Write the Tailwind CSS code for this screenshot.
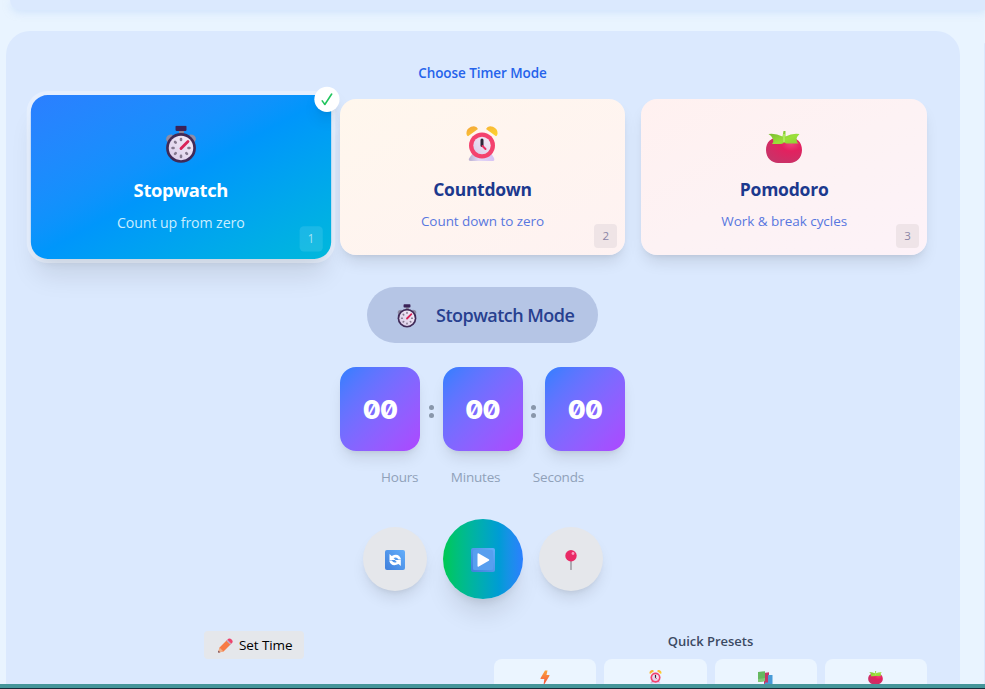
<!DOCTYPE html>
<html lang="en">
<head>
<meta charset="utf-8">
<title>Timer</title>
<script src="https://cdn.jsdelivr.net/npm/@tailwindcss/browser@4"></script>
</head>
<body class="flex h-[689px] w-[985px] flex-col overflow-hidden bg-[#e9f4ff] font-['Open_Sans','Noto_Sans',sans-serif]">
<svg width="0" height="0" class="absolute">
  <defs>
    <linearGradient id="gold" x1="0" y1="0" x2="1" y2="1"><stop stop-color="#f3a63a"/><stop offset="1" stop-color="#ffd62e"/></linearGradient>
    <linearGradient id="face" x1="1" y1="0" x2="0" y2="1"><stop stop-color="#f6edf8"/><stop offset="1" stop-color="#d9cbe8"/></linearGradient>
    <linearGradient id="base" x1="0" y1="0" x2="1" y2="0"><stop stop-color="#b9afd0"/><stop offset=".4" stop-color="#e3d8f5"/><stop offset="1" stop-color="#d6c2f5"/></linearGradient>
    <radialGradient id="red" cx=".7" cy=".25" r=".8"><stop stop-color="#f0407a"/><stop offset=".35" stop-color="#e3215f"/><stop offset="1" stop-color="#c93268"/></radialGradient>
    <linearGradient id="leaf" x1="0" y1="0" x2="1" y2="1"><stop stop-color="#72b52c"/><stop offset=".6" stop-color="#9be03a"/><stop offset="1" stop-color="#8ccc35"/></linearGradient>
    <linearGradient id="blue" x1="1" y1="0" x2="0" y2="1"><stop stop-color="#62aefb"/><stop offset="1" stop-color="#3f7fdb"/></linearGradient>
    <linearGradient id="bolt" x1="0" y1="0" x2="0" y2="1"><stop stop-color="#fba43b"/><stop offset="1" stop-color="#f4513f"/></linearGradient>
    <symbol id="stopwatch" viewBox="0 0 32 38">
      <path d="M14 5h5v5h-5z" fill="#8c8698"/>
      <rect x="10.500" y="0" width="11" height="5.500" rx="1.200" fill="#3b2257"/>
      <path d="M1 14q0-5 6-5l2 3-6 6zM31 14q0-5-6-5l-2 3 6 6z" fill="#8f8ca5"/>
      <circle cx="16" cy="22.500" r="15" fill="#402a57"/>
      <circle cx="16" cy="22.500" r="12.300" fill="url(#face)"/>
      <g stroke="#85798f" stroke-width="2.600" stroke-linecap="round"><path d="M16 13.500v1M16 30.500v1M7.500 22.500h1M23.500 22.500h1M10 16.500l.7.7M21.300 27.800l.7.7M10 28.500l.7-.7"/></g>
      <path d="M16 23l7-7" stroke="#d92358" stroke-width="2.900" stroke-linecap="round"/>
    </symbol>
    <symbol id="alarm" viewBox="0 0 32 36">
      <path d="M7 27h18l3 5q1 3-1 3H5q-4 0-1-4z" fill="url(#base)"/>
      <path d="M.5 8Q0 3 5 .8q5-2 7 2.200L2 10.200Q.8 10 .5 8zM31.500 8Q32 3 27 .8q-5-2-7 2.200l10 7.200q1.200-.2 1.500-2.200z" fill="url(#gold)"/>
      <circle cx="16" cy="19.500" r="13" fill="#f4426e"/>
      <circle cx="16" cy="19.500" r="8.700" fill="url(#face)"/>
      <path d="M16 14v5.500" stroke="#2f2437" stroke-width="3" stroke-linecap="round"/><path d="M16.500 20l3 3" stroke="#e92e62" stroke-width="2" stroke-linecap="round"/>
    </symbol>
    <symbol id="tomato" viewBox="0 0 36 32">
      <path d="M18 8C27 4 36 9 36 19c0 8-6 13-12 13H12C6 32 0 27 0 19 0 9 9 4 18 8z" fill="url(#red)"/>
      <path d="M2.500 3q7-1 14 2.500L17.500 0h2v5.500Q26 2 33.500 3q-3 3-3 5 0 3 2 4.500H20q-1-1-2-1-1 1-3 1.500H6q2-2 1-5-1-3-4.500-5z" fill="url(#leaf)"/>
      <path d="M18 3v8" stroke="#b2ef62" stroke-width="1.600"/>
    </symbol>
    <symbol id="repeat" viewBox="0 0 20 20">
      <rect width="20" height="20" rx="2" fill="url(#blue)"/>
      <path d="M4.500 4v6h6L8.500 8q3.300-1.600 5 1.600h2.700Q14 2.500 6.700 6zM15.800 16v-6h-6l2 2q-3.300 1.600-5-1.600H4.100Q6.300 17.500 13.600 14z" fill="#fff"/>
    </symbol>
    <symbol id="play" viewBox="0 0 24 24">
      <rect width="24" height="24" rx="2" fill="url(#blue)"/><rect x="2" y="2" width="20" height="20" rx="1.500" fill="#579fef"/>
      <path d="M6.500 6.200q0-1.500 1.300-.8l10 5.800q1.200.8 0 1.600l-10 5.700q-1.300.7-1.300-.8z" fill="#fff"/>
    </symbol>
    <symbol id="pin" viewBox="0 0 12 20">
      <path d="M6 10v9.500" stroke="#8e8b95" stroke-width="1.300" stroke-linecap="round"/>
      <circle cx="6" cy="5.800" r="5.700" fill="#e92a66"/><circle cx="8" cy="3.500" r="1.400" fill="#ff9ac0"/>
    </symbol>
    <symbol id="pencil" viewBox="0 0 15 15">
      <path d="M1.500 9.500L9 2l4 4-7.500 7.500L.8 14.500q-.8 0-.5-.8z" fill="#f77b45"/>
      <path d="M1.500 9.500l4 4L.8 14.500q-.8 0-.5-.8z" fill="#efb08a"/><path d="M.5 12.800l1.700 1.400-1.600.4q-.7 0-.4-.8z" fill="#5c4257"/>
      <path d="M8.300 2.700l4 4 1-1-4-4z" fill="#b9b1cf"/><path d="M9.300 1.700q2-2.400 4.300-.3 2.200 2.200-.3 4.300z" fill="#ed446d"/>
    </symbol>
    <symbol id="zap" viewBox="0 0 10 15"><path d="M5 .5h2.500L6.500 5H9q1 0 .4 1L4.500 14q-.8 1-.8-.3L4.300 9H1.200Q.2 9 .6 8z" fill="url(#bolt)"/></symbol>
    <symbol id="books" viewBox="0 0 15 15"><path d="M6 2l5-.8V12L6 13z" fill="#c43768"/><path d="M10 4h4.500v11H7v-3.500h3z" fill="#489bd8"/><path d="M0 1l7-.8V10L1 11H0z" fill="#65b860"/><path d="M0 8l7-1v3l-6 1H0z" fill="#81ca78"/></symbol>
  </defs>
</svg>

<div class="ml-[10px] h-[10px] shrink-0 rounded-bl-xl bg-[#dbe9fe] shadow-[0_3px_7px_rgba(190,215,250,.5)]"></div>

<div class="mt-[21px] flex min-h-0 flex-1 items-stretch justify-between overflow-hidden pl-[6px]">
  <main class="w-[954px] shrink-0 rounded-t-[24px] bg-[#dbe9fe] pt-[32px] pr-[33px] pl-[32px]">
    <h2 class="text-center text-[13.500px] leading-5 font-semibold tracking-[-.06px] text-[#2563eb]">Choose Timer Mode</h2>

    <section class="mt-4 grid grid-cols-3 gap-4">
      <div class="relative h-[156px] scale-105 rounded-2xl bg-linear-to-br from-[#2b7fff] via-[#0096fb] to-[#00b8db] pt-[29px] text-center shadow-[0_20px_25px_-5px_rgba(0,0,0,.1),0_8px_10px_-6px_rgba(0,0,0,.1)] ring-4 ring-white/30">
        <svg class="mx-auto h-[36px] w-[32px]"><use href="#stopwatch"/></svg>
        <h3 class="mt-[11px] text-[17.500px] leading-7 font-bold tracking-[-.32px] text-white">Stopwatch</h3>
        <p class="mt-[8px] text-[13.500px] leading-5 tracking-[-.1px] text-[#c8edff]">Count up from zero</p>
        <span class="absolute right-2 bottom-[7px] flex h-6 w-[22px] items-center justify-center rounded bg-white/10 text-[11.500px] text-white/60">1</span>
        <span class="absolute -top-2 -right-2 flex size-6 items-center justify-center rounded-full bg-white shadow-lg"><svg class="h-3 w-3" viewBox="0 0 12 12" fill="none" stroke="#22c55e" stroke-width="1.500" stroke-linecap="round" stroke-linejoin="round"><path d="M1.500 7.500L4 11 10.500 1"/></svg></span>
      </div>
      <div class="relative h-[156px] rounded-2xl bg-linear-to-br from-[#fff7ed] to-[#fef2f2] pt-[27px] text-center shadow-lg">
        <svg class="mx-auto h-[36px] w-[32px]"><use href="#alarm"/></svg>
        <h3 class="mt-[13px] text-[17.500px] leading-7 font-bold tracking-[-.26px] text-[#1c398e]">Countdown</h3>
        <p class="mt-[8px] text-[13.500px] leading-5 tracking-[-.05px] text-[#5877df]">Count down to zero</p>
        <span class="absolute right-2 bottom-[7px] flex h-6 w-[23px] items-center justify-center rounded bg-[#efe4e6] text-[11.500px] text-[#8b85a6]">2</span>
      </div>
      <div class="relative h-[156px] rounded-2xl bg-linear-to-br from-[#fff1f0] via-[#fdf2f4] to-[#fdf2f8] pt-[32px] text-center shadow-lg">
        <svg class="mx-auto h-[32px] w-[36px]"><use href="#tomato"/></svg>
        <h3 class="mt-[12px] text-[17.500px] leading-7 font-bold tracking-[-.22px] text-[#1c398e]">Pomodoro</h3>
        <p class="mt-[8px] text-[13.500px] leading-5 tracking-[-.04px] text-[#5877df]">Work &amp; break cycles</p>
        <span class="absolute right-2 bottom-[7px] flex h-6 w-[23px] items-center justify-center rounded bg-[#efe4e8] text-[11.500px] text-[#8b85a6]">3</span>
      </div>
    </section>

    <div class="mx-auto mt-8 flex h-14 w-[231px] items-center rounded-full bg-[#b5c5e5] pl-[30px]">
      <svg class="mt-[2px] h-[24px] w-[20px]"><use href="#stopwatch"/></svg>
      <span class="ml-[19px] text-[18px] font-semibold tracking-[-.52px] whitespace-nowrap text-[#27408f]">Stopwatch Mode</span>
    </div>

    <div class="mx-auto mt-6 flex w-[285px] items-center justify-between text-white">
      <div class="flex h-[84px] w-20 items-center justify-center rounded-2xl bg-linear-to-br from-[#2b7fff] to-[#ad46ff] font-['Inter',sans-serif] text-[26px] font-extrabold tracking-[-.8px] slashed-zero shadow-lg">00</div>
      <div class="mt-1 flex flex-col gap-[3px]"><i class="size-[5px] rounded-full bg-[#8997ab]"></i><i class="size-[5px] rounded-full bg-[#8997ab]"></i></div>
      <div class="flex h-[84px] w-20 items-center justify-center rounded-2xl bg-linear-to-br from-[#2b7fff] to-[#ad46ff] font-['Inter',sans-serif] text-[26px] font-extrabold tracking-[-.8px] slashed-zero shadow-lg">00</div>
      <div class="mt-1 flex flex-col gap-[3px]"><i class="size-[5px] rounded-full bg-[#8997ab]"></i><i class="size-[5px] rounded-full bg-[#8997ab]"></i></div>
      <div class="flex h-[84px] w-20 items-center justify-center rounded-2xl bg-linear-to-br from-[#2b7fff] to-[#ad46ff] font-['Inter',sans-serif] text-[26px] font-extrabold tracking-[-.8px] slashed-zero shadow-lg">00</div>
    </div>
    <div class="mx-auto mt-4 flex w-[203px] justify-between text-[13.500px] leading-5 tracking-[-.2px] text-[#90a1b9]"><span>Hours</span><span>Minutes</span><span>Seconds</span></div>

    <div class="mt-8 flex items-center justify-center gap-4">
      <button class="flex size-16 items-center justify-center rounded-full bg-[#e5e7eb] shadow-lg"><svg class="mt-[2px] size-5"><use href="#repeat"/></svg></button>
      <button class="flex size-20 items-center justify-center rounded-full bg-linear-to-r from-[#00c950] to-[#2b7fff] shadow-xl"><svg class="mt-[2px] size-6"><use href="#play"/></svg></button>
      <button class="flex size-16 items-center justify-center rounded-full bg-[#e5e7eb] shadow-lg"><svg class="mt-[2px] h-5 w-3"><use href="#pin"/></svg></button>
    </div>

    <div class="mt-8 flex justify-between">
      <div class="flex w-[432px] justify-center"><button class="flex h-7 w-[100px] items-center rounded bg-[#e5e7eb] pl-[14px] text-[13.500px] tracking-[-.1px] text-black"><svg class="mr-[6px] size-[15px]"><use href="#pencil"/></svg>Set Time</button></div>
      <div class="w-[433px]">
        <h4 class="text-center text-[13px] leading-5 font-semibold tracking-[-.03px] text-[#3b4a63]">Quick Presets</h4>
        <div class="mt-2 grid grid-cols-4 gap-2">
          <div class="flex h-16 justify-center rounded-lg bg-[#ebf5ff] pt-[11px]"><svg class="h-[15px] w-[10px]"><use href="#zap"/></svg></div>
          <div class="flex h-16 justify-center rounded-lg bg-[#ebf5ff] pt-[11px]"><svg class="h-[14px] w-[13px]"><use href="#alarm"/></svg></div>
          <div class="flex h-16 justify-center rounded-lg bg-[#ebf5ff] pt-[12px]"><svg class="size-[15px]"><use href="#books"/></svg></div>
          <div class="flex h-16 justify-center rounded-lg bg-[#ebf5ff] pt-[12px]"><svg class="h-[13px] w-[15px]"><use href="#tomato"/></svg></div>
        </div>
      </div>
    </div>
  </main>
  <aside class="mt-3 w-px rounded-tl bg-[#dbe9fe]"></aside>
</div>
<footer class="relative h-[5px] shrink-0 border-b border-[#172b3a] bg-[#45969a]"></footer>
</body>
</html>
